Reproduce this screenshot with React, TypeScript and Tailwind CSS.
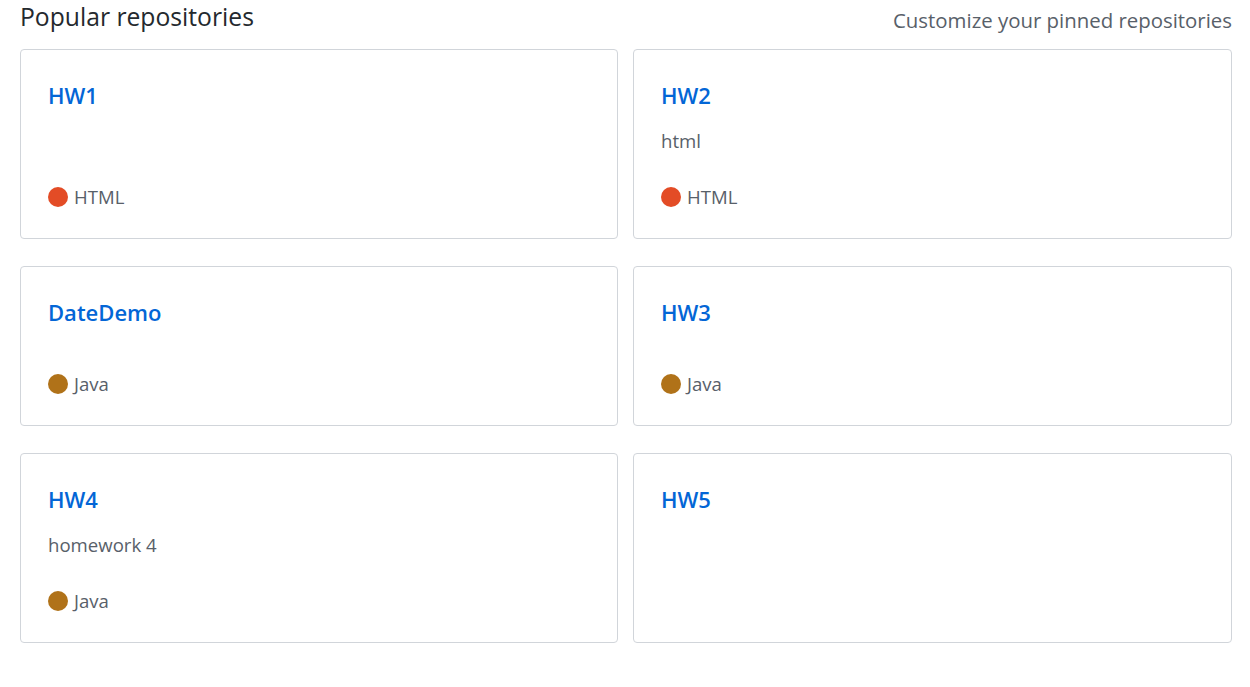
import React from "react";

type Repo = {
  name: string;
  desc?: string;
  lang?: { name: string; color: string };
};

const HTML = { name: "HTML", color: "#e34c26" };
const JAVA = { name: "Java", color: "#b07219" };

const repos: Repo[] = [
  { name: "HW1", lang: HTML },
  { name: "HW2", desc: "html", lang: HTML },
  { name: "DateDemo", lang: JAVA },
  { name: "HW3", lang: JAVA },
  { name: "HW4", desc: "homework 4", lang: JAVA },
  { name: "HW5" },
];

function RepoCard({ repo }: { repo: Repo }) {
  return (
    <div className="flex flex-col rounded-[4px] border border-[#d1d5da] bg-white px-[27px] pt-[27px] pb-[26px]">
      <a className="h-[36px] text-[22px] font-semibold leading-[36px] text-[#0366d6]">{repo.name}</a>
      {repo.desc && (
        <p className="mt-[13px] text-[18.6px] leading-[30px] text-[#586069]">{repo.desc}</p>
      )}
      {repo.lang && (
        <>
          {/* spacer pushes the language row to the card bottom */}
          <div className={repo.desc ? "min-h-[26px] flex-1" : "min-h-[39px] flex-1"} />
          <div className="flex items-center gap-[6px] text-[18.6px] leading-[30px] text-[#586069]">
            <span className="h-[20px] w-[20px] rounded-full" style={{ backgroundColor: repo.lang.color }} />
            <span>{repo.lang.name}</span>
          </div>
        </>
      )}
    </div>
  );
}

export default function App() {
  return (
    <div className="min-h-screen bg-white pl-[20px] pr-[18px] font-['Open_Sans',sans-serif]">
      <div className="flex h-[40px] items-center justify-between">
        <h2 className="-mt-[6px] text-[24.7px] leading-[34px] text-[#24292e]">Popular repositories</h2>
        <span className="text-[20.4px] text-[#586069]">Customize your pinned repositories</span>
      </div>
      <div className="mt-[9px] grid grid-cols-[598px_599px] gap-x-[15px] gap-y-[27px]">
        {repos.map((r) => (
          <RepoCard key={r.name} repo={r} />
        ))}
      </div>
    </div>
  );
}
